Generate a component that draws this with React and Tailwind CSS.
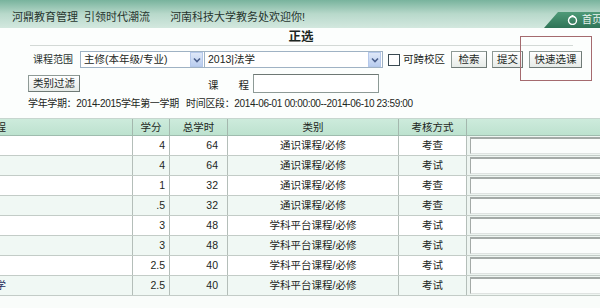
import React from "react";

const rows = [
  { name: "思想道德修养与法律基础", credit: "4", hours: "64", cat: "通识课程/必修", exam: "考查" },
  { name: "大学英语", credit: "4", hours: "64", cat: "通识课程/必修", exam: "考试" },
  { name: "体育", credit: "1", hours: "32", cat: "通识课程/必修", exam: "考查" },
  { name: "形势与政策", credit: ".5", hours: "32", cat: "通识课程/必修", exam: "考查" },
  { name: "宪法学", credit: "3", hours: "48", cat: "学科平台课程/必修", exam: "考试" },
  { name: "法理学", credit: "3", hours: "48", cat: "学科平台课程/必修", exam: "考试" },
  { name: "中国法制史", credit: "2.5", hours: "40", cat: "学科平台课程/必修", exam: "考试" },
  { name: "西方法律思想史与中国法律史学", credit: "2.5", hours: "40", cat: "学科平台课程/必修", exam: "考试" },
];

function Arrow() {
  return (
    <div className="w-[13px] h-[15px] bg-gradient-to-b from-[#dfe8f8] to-[#b9cdef] border border-[#b5c8ea] flex items-center justify-center">
      <svg width="8" height="6" viewBox="0 0 8 6">
        <path d="M1 1.5 L4 4.5 L7 1.5" stroke="#4a5f8c" strokeWidth="1.6" fill="none" />
      </svg>
    </div>
  );
}

function Btn({ children, className = "" }) {
  return (
    <div
      className={
        "h-[17px] flex items-center justify-center whitespace-nowrap border border-[#8e9a96] border-r-[#6f7a76] border-b-[#6f7a76] bg-gradient-to-b from-[#ffffff] to-[#e6ebe8] text-[10.5px] text-[#1e2a26] leading-none " +
        className
      }
    >
      {children}
    </div>
  );
}

export default function App() {
  return (
    <div className="w-[600px] h-[308px] overflow-hidden relative bg-[#f9fcfa] font-['Liberation_Sans','Noto_Sans_CJK_SC',sans-serif] text-[#1c2622]">
      {/* top bar */}
      <div className="h-[28px] flex bg-gradient-to-b from-[#78b39d] via-[#b8d9cb] to-[#d3e8df]">
        <div className="flex items-end pb-[5px] pl-[12px] text-[11px] leading-none text-[#26352e] whitespace-nowrap">
          <span>河鼎教育管理&nbsp;&nbsp;引领时代潮流</span>
          <span className="ml-[20px]">河南科技大学教务处欢迎你!</span>
        </div>
        <div className="ml-auto self-end h-[16px] w-[56px] bg-gradient-to-b from-[#4f9a78] to-[#2f7457] [clip-path:polygon(14px_0,100%_0,100%_100%,0_100%)] flex items-center pl-[23px] gap-[4px] whitespace-nowrap overflow-hidden">
          <svg width="11" height="10" viewBox="0 0 11 10" className="shrink-0">
            <circle cx="5.5" cy="5.5" r="4" fill="none" stroke="#ffffff" strokeWidth="1.4" />
            <path d="M2 3 L5.5 0.5 L9 3" stroke="#ffffff" strokeWidth="1.2" fill="none" />
          </svg>
          <span className="text-[10px] leading-none text-[#eaf5ef]">首页</span>
        </div>
      </div>

      {/* form area */}
      <div className="bg-[#fcfefd] h-[90px] pt-[2px]">
        <div className="text-center pl-[2px] text-[12.5px] font-bold leading-[14px] h-[14px]">正选</div>
        <div className="ml-[30px] w-[543px] h-[1px] bg-[#d3d9d6] mt-[1px]" />
        <div className="flex items-center h-[17px] mt-[5px] text-[10.5px] leading-none whitespace-nowrap">
          <span className="ml-[33px] w-[42px] text-[10px] text-[#2a3430]">课程范围</span>
          <div className="ml-[5px] w-[125px] h-[17px] border border-[#9fb2c4] bg-white flex items-center justify-between pl-[3px] pr-[1px]">
            <span>主修(本年级/专业)</span>
            <Arrow />
          </div>
          <div className="w-[178px] h-[17px] border border-[#9fb2c4] border-l-0 bg-white flex items-center justify-between pl-[3px] pr-[1px]">
            <span>2013|法学</span>
            <Arrow />
          </div>
          <div className="ml-[5px] w-[12px] h-[12px] border border-[#3a4a52] bg-white" />
          <span className="ml-[3px]">可跨校区</span>
          <Btn className="ml-[6px] w-[36px]">检索</Btn>
          <Btn className="ml-[5px] w-[31px]">提交</Btn>
          <Btn className="ml-[6px] w-[53px]">快速选课</Btn>
        </div>
        <div className="flex items-center h-[19px] mt-[6px] text-[10.5px] leading-none whitespace-nowrap">
          <Btn className="ml-[28px] w-[52px]">类别过滤</Btn>
          <span className="ml-[128px] mt-[3px]">课</span>
          <span className="ml-[20px] mt-[3px]">程</span>
          <div className="ml-[4px] w-[126px] h-[19px] border border-[#8d9a96] border-t-[#6e7874] bg-white" />
        </div>
        <div className="mt-[5px] pl-[28px] text-[10px] leading-[12px] whitespace-nowrap tracking-[-0.35px]">
          学年学期：2014-2015学年第一学期&nbsp;&nbsp;&nbsp;时间区段：2014-06-01 00:00:00--2014-06-10 23:59:00
        </div>
      </div>

      {/* table */}
      <div className="border-t border-[#c7d6cf] overflow-hidden">
        <div className="ml-[-145px] w-[752px] text-[10.5px] leading-none">
          <div className="grid grid-cols-[278px_37px_58px_171px_68px_140px] h-[17px] bg-gradient-to-b from-[#cdebdc] to-[#bde2cf] border-b border-[#9fbcae]">
            <div className="flex items-center justify-center border-r border-[#a3b7ad] pl-[4px]">课程</div>
            <div className="flex items-center justify-center border-r border-[#a3b7ad]">学分</div>
            <div className="flex items-center justify-center border-r border-[#a3b7ad]">总学时</div>
            <div className="flex items-center justify-center border-r border-[#a3b7ad]">类别</div>
            <div className="flex items-center justify-center border-r border-[#a3b7ad]">考核方式</div>
            <div />
          </div>
          {rows.map((r, i) => (
            <div
              key={i}
              className={
                "grid grid-cols-[278px_37px_58px_171px_68px_140px] h-[20px] border-b border-[#c3ccc7] " +
                (i % 2 === 0 ? "bg-[#ffffff]" : "bg-[#f0f8f4]")
              }
            >
              <div className="flex items-center border-r border-[#b4beb9] pl-[4px] text-[#1f2c5c] whitespace-nowrap overflow-hidden">
                {r.name}
              </div>
              <div className="flex items-center justify-end border-r border-[#b4beb9] pr-[4px]">{r.credit}</div>
              <div className="flex items-center justify-end border-r border-[#b4beb9] pr-[9px]">{r.hours}</div>
              <div className="flex items-center justify-center border-r border-[#b4beb9]">{r.cat}</div>
              <div className="flex items-center justify-center border-r border-[#b4beb9]">{r.exam}</div>
              <div className="flex items-center pl-[3px] bg-[#eef5f1]">
                <div className="w-[140px] h-[17px] border-t-2 border-l border-[#a4aaa7] border-r border-b border-r-[#dfe3e1] border-b-[#dfe3e1] bg-[#fbfdfc]" />
              </div>
            </div>
          ))}
        </div>
      </div>

      {/* annotation box */}
      <div className="absolute left-[520px] top-[36px] w-[72px] h-[45px] border border-[#a46a6e]" />
    </div>
  );
}
